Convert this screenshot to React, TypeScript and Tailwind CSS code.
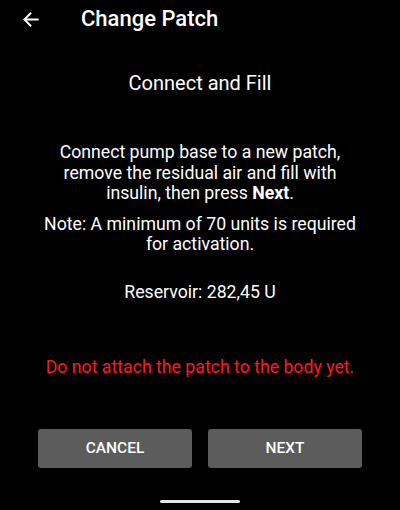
import React from "react";

export default function App() {
  return (
    <div
      className="w-[400px] h-[510px] bg-black text-white flex flex-col overflow-hidden"
      style={{ fontFamily: "Roboto, 'Noto Sans', sans-serif" }}
    >
      <div className="h-[38px] flex items-center shrink-0">
        <div className="w-[81px] flex items-center pl-[22px]">
          <svg width="19" height="19" viewBox="0 0 24 24" fill="none">
            <path d="M21 12H3.5M11.5 3.5L3 12l8.5 8.5" stroke="white" strokeWidth="2.4" strokeLinecap="butt" />
          </svg>
        </div>
        <div className="text-[22px] font-medium leading-none">Change Patch</div>
      </div>
      <div className="mt-[31px] text-center text-[20px] leading-[28px]">Connect and Fill</div>
      <div className="mt-[45px] px-[50px] text-center text-[17.7px] leading-[20.5px]">
        Connect pump base to a new patch, remove the residual air and fill with insulin, then press{" "}
        <span className="font-bold">Next</span>.
      </div>
      <div className="mt-[10px] px-[40px] text-center text-[17.7px] leading-[20.5px]">
        Note: A minimum of 70 units is required for activation.
      </div>
      <div className="mt-[27px] text-center text-[17.7px] leading-[20.5px]">Reservoir: 282,45 U</div>
      <div className="mt-[55px] text-center text-[17.7px] leading-[20.5px] text-[#ff1a1a]">
        Do not attach the patch to the body yet.
      </div>
      <div className="mt-[51.5px] flex gap-[16px] px-[38px]">
        <button className="flex-1 h-[39px] bg-[#5c5c5c] rounded-[3px] text-[15.5px] font-medium text-white">
          CANCEL
        </button>
        <button className="flex-1 h-[39px] bg-[#5c5c5c] rounded-[3px] text-[15.5px] font-medium text-white">
          NEXT
        </button>
      </div>
      <div className="flex justify-center mt-[32px]">
        <div className="w-[80px] h-[3px] bg-[#e6e6e6] rounded-full" />
      </div>
    </div>
  );
}
